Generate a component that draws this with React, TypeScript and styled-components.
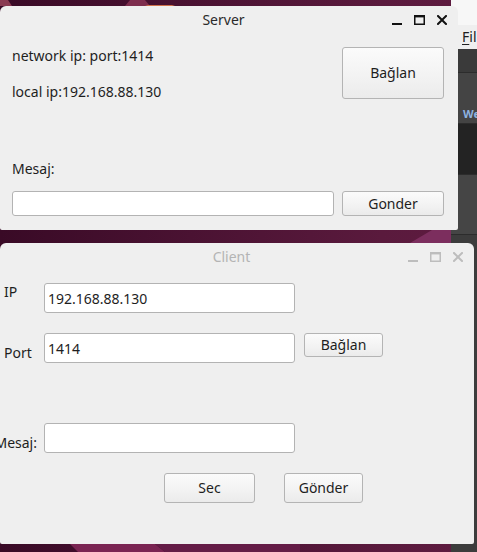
import React from "react";
import styled, { createGlobalStyle, css } from "styled-components";

const Global = createGlobalStyle`
  html, body { margin: 0; padding: 0; }
  body {
    width: 477px; height: 552px; overflow: hidden;
    font-family: "Noto Sans", "DejaVu Sans", sans-serif;
  }
`;

const FONT = `"Noto Sans", "DejaVu Sans", sans-serif`;

const Desktop = styled.div`
  position: relative;
  width: 477px;
  height: 552px;
  overflow: hidden;
  background: linear-gradient(90deg, #390a26 0%, #4a1232 40%, #5a1a3d 80%, #5e1b40 100%);
`;

const Wallpaper = styled.svg`
  position: absolute;
  inset: 0;
`;

/* background application window on the right */
const BackWindow = styled.div`
  position: absolute;
  left: 451px;
  top: 0;
  width: 60px;
  height: 552px;
  display: flex;
  flex-direction: column;
  background: #3c3c3c;
  font-family: ${FONT};
  overflow: hidden;
`;

const BackTitle = styled.div`
  height: 25px;
  background: #f7f7f7;
`;

const BackMenu = styled.div`
  height: 24px;
  background: #efefef;
  color: #202020;
  font-size: 14px;
  line-height: 24px;
  padding-left: 11px;
  u { text-decoration-thickness: 1px; text-underline-offset: 2px; }
`;

const BackBand = styled.div<{ $h: number; $bg: string }>`
  height: ${(p) => p.$h}px;
  background: ${(p) => p.$bg};
  border-bottom: 1px solid #2c2c2c;
  position: relative;
  font-size: 11px;
  font-weight: bold;
  color: #8fb3e0;
  display: flex;
  align-items: flex-end;
  padding-left: 12px;
  padding-bottom: 2px;
  box-sizing: border-box;
`;

const Window = styled.div<{ $left: number; $top: number; $w: number; $h: number }>`
  position: absolute;
  left: ${(p) => p.$left}px;
  top: ${(p) => p.$top}px;
  width: ${(p) => p.$w}px;
  height: ${(p) => p.$h}px;
  background: #efefef;
  border-radius: 6px 6px 2px 2px;
  display: flex;
  flex-direction: column;
  overflow: hidden;
  font-family: ${FONT};
  color: #1e1e1e;
  box-sizing: border-box;
`;

const TitleBar = styled.div<{ $active: boolean }>`
  height: 28px;
  flex: none;
  display: grid;
  grid-template-columns: 1fr auto 1fr;
  align-items: center;
  padding-right: 11px;
  font-size: 14px;
  color: ${(p) => (p.$active ? "#2a2a2a" : "#b4b4b4")};
`;

const TitleText = styled.div`
  grid-column: 2;
  line-height: 28px;
`;

const Controls = styled.div`
  grid-column: 3;
  justify-self: end;
  display: flex;
  align-items: center;
  gap: 12px;
  height: 28px;
`;

const Content = styled.div<{ $pad: string }>`
  flex: 1;
  display: flex;
  flex-direction: column;
  padding: ${(p) => p.$pad};
  font-size: 14px;
`;

const TopSection = styled.div`
  display: flex;
  justify-content: space-between;
`;

const LabelColumn = styled.div`
  display: flex;
  flex-direction: column;
`;

const Text = styled.div<{ $mt?: number }>`
  height: 20px;
  line-height: 20px;
  margin-top: ${(p) => p.$mt ?? 0}px;
  white-space: nowrap;
`;

const Button = styled.button<{ $w: number; $h: number; $mt?: number; $ml?: number }>`
  width: ${(p) => p.$w}px;
  height: ${(p) => p.$h}px;
  margin-top: ${(p) => p.$mt ?? 0}px;
  margin-left: ${(p) => p.$ml ?? 0}px;
  flex: none;
  box-sizing: border-box;
  border: 1px solid #b4b4b4;
  border-radius: 3px;
  background: linear-gradient(180deg, #fbfbfb 0%, #f2f2f2 60%, #ebebeb 100%);
  font-family: ${FONT};
  font-size: 14px;
  color: #1e1e1e;
  padding: 0;
  line-height: 1;
`;

const Input = styled.input<{ $w: number; $h: number }>`
  width: ${(p) => p.$w}px;
  height: ${(p) => p.$h}px;
  flex: none;
  box-sizing: border-box;
  border: 1px solid #b3b3b3;
  border-radius: 3px;
  background: #ffffff;
  font-family: ${FONT};
  font-size: 14px;
  color: #1e1e1e;
  padding: 0 3px;
  outline: none;
`;

const InputRow = styled.div<{ $mt: number; $gap?: number }>`
  display: flex;
  margin-top: ${(p) => p.$mt}px;
  gap: ${(p) => p.$gap ?? 0}px;
`;

const FormRow = styled.div<{ $mt: number }>`
  display: flex;
  align-items: flex-start;
  height: 30px;
  margin-top: ${(p) => p.$mt}px;
`;

const FieldLabel = styled.div<{ $align: "top" | "bottom"; $right?: boolean }>`
  width: 44px;
  flex: none;
  box-sizing: border-box;
  padding: 0 7px 0 4px;
  height: 20px;
  line-height: 20px;
  display: flex;
  white-space: nowrap;
  justify-content: ${(p) => (p.$right ? "flex-end" : "flex-start")};
  ${(p) =>
    p.$align === "top"
      ? css`align-self: flex-start; margin-top: -1px;`
      : css`align-self: flex-end;`}
`;

const ButtonRow = styled.div`
  display: flex;
  margin-top: 20px;
  padding-left: 164px;
  gap: 29px;
`;

const Icon = ({ kind, color }: { kind: "min" | "max" | "close"; color: string }) => {
  if (kind === "min")
    return (
      <svg width="10" height="10" viewBox="0 0 10 10">
        <rect x="0" y="8" width="10" height="2" fill={color} />
      </svg>
    );
  if (kind === "max")
    return (
      <svg width="11" height="10" viewBox="0 0 11 10">
        <path d="M0.75 1.5 H10.25 V9.25 H0.75 Z" fill="none" stroke={color} strokeWidth="1.5" />
        <rect x="0" y="0" width="11" height="2.2" fill={color} />
      </svg>
    );
  return (
    <svg width="10" height="10" viewBox="0 0 10 10">
      <path d="M1 1 L9 9 M9 1 L1 9" stroke={color} strokeWidth="2" strokeLinecap="square" />
    </svg>
  );
};

const WindowControls = ({ color }: { color: string }) => (
  <Controls>
    <Icon kind="min" color={color} />
    <Icon kind="max" color={color} />
    <Icon kind="close" color={color} />
  </Controls>
);

export default function App() {
  return (
    <Desktop>
      <Global />
      <Wallpaper width="477" height="552" viewBox="0 0 477 552">
        <path d="M0 0 L8 0 L12 6 L0 6 Z" fill="#8a3a52" />
        <path d="M125 6 L130 0 L145 0 L150 6 Z" fill="#7e2e4e" />
        <path d="M145 6 L175 6 L172 5 L148 5 Z" fill="#d0704a" />
        <path d="M410 243 L432 230 L451 230 L451 243 Z" fill="#7c2e5e" />
        <path d="M70 544 L155 544 L165 552 L78 552 Z" fill="#7a2452" />
        <path d="M155 544 L300 544 L300 552 L165 552 Z" fill="#641c46" />
      </Wallpaper>

      <BackWindow>
        <BackTitle />
        <BackMenu>
          <u>F</u>il
        </BackMenu>
        <BackBand $h={24} $bg="#3a3a3a" />
        <BackBand $h={51} $bg="#444444">We</BackBand>
        <BackBand $h={51} $bg="#232323" />
        <BackBand $h={60} $bg="#454545" />
      </BackWindow>

      <Window $left={0} $top={6} $w={458} $h={224}>
        <TitleBar $active>
          <TitleText>Server</TitleText>
          <WindowControls color="#111111" />
        </TitleBar>
        <Content $pad="0 14px 0 12px">
          <TopSection>
            <LabelColumn>
              <Text $mt={12}>network ip: port:1414</Text>
              <Text $mt={16}>local ip:192.168.88.130</Text>
            </LabelColumn>
            <Button $w={102} $h={52} $mt={13}>Bağlan</Button>
          </TopSection>
          <Text $mt={57}>Mesaj:</Text>
          <InputRow $mt={12} $gap={8}>
            <Input $w={322} $h={25} />
            <Button $w={102} $h={25}>Gonder</Button>
          </InputRow>
        </Content>
      </Window>

      <Window $left={0} $top={243} $w={474} $h={301}>
        <TitleBar $active={false}>
          <TitleText>Client</TitleText>
          <WindowControls color="#bdbdbd" />
        </TitleBar>
        <Content $pad="0">
          <FormRow $mt={12}>
            <FieldLabel $align="top">IP</FieldLabel>
            <Input $w={251} $h={30} defaultValue="192.168.88.130" />
          </FormRow>
          <FormRow $mt={20}>
            <FieldLabel $align="bottom">Port</FieldLabel>
            <Input $w={251} $h={30} defaultValue="1414" />
            <Button $w={79} $h={24} $ml={9}>Bağlan</Button>
          </FormRow>
          <FormRow $mt={60}>
            <FieldLabel $align="bottom" $right>Mesaj:</FieldLabel>
            <Input $w={251} $h={30} />
          </FormRow>
          <ButtonRow>
            <Button $w={91} $h={30}>Sec</Button>
            <Button $w={79} $h={30}>Gönder</Button>
          </ButtonRow>
        </Content>
      </Window>
    </Desktop>
  );
}
